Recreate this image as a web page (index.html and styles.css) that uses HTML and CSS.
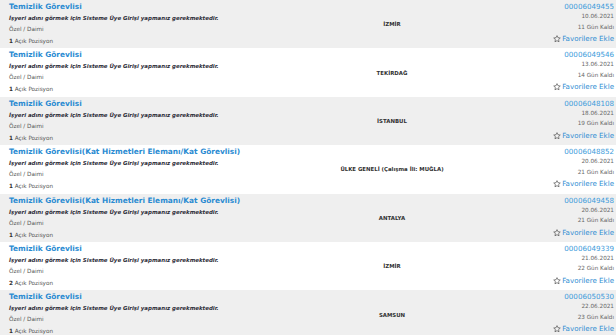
FILE: index.html
```html
<!DOCTYPE html>
<html lang="tr">
<head>
<meta charset="UTF-8">
<meta name="viewport" content="width=device-width, initial-scale=1.0">
<title>İş İlanları</title>
<link rel="stylesheet" href="styles.css">
</head>
<body>
    <div class="job-list">

        <div class="job">
            <div class="job-info">
                <a class="job-title" href="#">Temizlik Görevlisi</a>
                <div class="job-note">İşyeri adını görmek için Sisteme Üye Girişi yapmanız gerekmektedir.</div>
                <div class="job-type">Özel / Daimi</div>
                <div class="job-count"><b>1</b> Açık Pozisyon</div>
            </div>
            <div class="job-city">İZMİR</div>
            <div class="job-meta">
                <a class="job-no" href="#">00006049455</a>
                <div class="job-date">10.06.2021</div>
                <div class="job-left">11 Gün Kaldı</div>
                <a class="job-fav" href="#"><svg viewBox="0 0 10 10"><path d="M5 .8l1.25 2.6 2.85.35-2.1 1.95.55 2.8L5 7.1 2.45 8.5 3 5.7.9 3.75l2.85-.35z"/></svg>Favorilere Ekle</a>
            </div>
        </div>

        <div class="job">
            <div class="job-info">
                <a class="job-title" href="#">Temizlik Görevlisi</a>
                <div class="job-note">İşyeri adını görmek için Sisteme Üye Girişi yapmanız gerekmektedir.</div>
                <div class="job-type">Özel / Daimi</div>
                <div class="job-count"><b>1</b> Açık Pozisyon</div>
            </div>
            <div class="job-city">TEKİRDAĞ</div>
            <div class="job-meta">
                <a class="job-no" href="#">00006049546</a>
                <div class="job-date">13.06.2021</div>
                <div class="job-left">14 Gün Kaldı</div>
                <a class="job-fav" href="#"><svg viewBox="0 0 10 10"><path d="M5 .8l1.25 2.6 2.85.35-2.1 1.95.55 2.8L5 7.1 2.45 8.5 3 5.7.9 3.75l2.85-.35z"/></svg>Favorilere Ekle</a>
            </div>
        </div>

        <div class="job">
            <div class="job-info">
                <a class="job-title" href="#">Temizlik Görevlisi</a>
                <div class="job-note">İşyeri adını görmek için Sisteme Üye Girişi yapmanız gerekmektedir.</div>
                <div class="job-type">Özel / Daimi</div>
                <div class="job-count"><b>1</b> Açık Pozisyon</div>
            </div>
            <div class="job-city">İSTANBUL</div>
            <div class="job-meta">
                <a class="job-no" href="#">00006048108</a>
                <div class="job-date">18.06.2021</div>
                <div class="job-left">19 Gün Kaldı</div>
                <a class="job-fav" href="#"><svg viewBox="0 0 10 10"><path d="M5 .8l1.25 2.6 2.85.35-2.1 1.95.55 2.8L5 7.1 2.45 8.5 3 5.7.9 3.75l2.85-.35z"/></svg>Favorilere Ekle</a>
            </div>
        </div>

        <div class="job">
            <div class="job-info">
                <a class="job-title" href="#">Temizlik Görevlisi(Kat Hizmetleri Elemanı/Kat Görevlisi)</a>
                <div class="job-note">İşyeri adını görmek için Sisteme Üye Girişi yapmanız gerekmektedir.</div>
                <div class="job-type">Özel / Daimi</div>
                <div class="job-count"><b>1</b> Açık Pozisyon</div>
            </div>
            <div class="job-city">ÜLKE GENELİ (Çalışma İli: MUĞLA)</div>
            <div class="job-meta">
                <a class="job-no" href="#">00006048852</a>
                <div class="job-date">20.06.2021</div>
                <div class="job-left">21 Gün Kaldı</div>
                <a class="job-fav" href="#"><svg viewBox="0 0 10 10"><path d="M5 .8l1.25 2.6 2.85.35-2.1 1.95.55 2.8L5 7.1 2.45 8.5 3 5.7.9 3.75l2.85-.35z"/></svg>Favorilere Ekle</a>
            </div>
        </div>

        <div class="job">
            <div class="job-info">
                <a class="job-title" href="#">Temizlik Görevlisi(Kat Hizmetleri Elemanı/Kat Görevlisi)</a>
                <div class="job-note">İşyeri adını görmek için Sisteme Üye Girişi yapmanız gerekmektedir.</div>
                <div class="job-type">Özel / Daimi</div>
                <div class="job-count"><b>1</b> Açık Pozisyon</div>
            </div>
            <div class="job-city">ANTALYA</div>
            <div class="job-meta">
                <a class="job-no" href="#">00006049458</a>
                <div class="job-date">20.06.2021</div>
                <div class="job-left">21 Gün Kaldı</div>
                <a class="job-fav" href="#"><svg viewBox="0 0 10 10"><path d="M5 .8l1.25 2.6 2.85.35-2.1 1.95.55 2.8L5 7.1 2.45 8.5 3 5.7.9 3.75l2.85-.35z"/></svg>Favorilere Ekle</a>
            </div>
        </div>

        <div class="job">
            <div class="job-info">
                <a class="job-title" href="#">Temizlik Görevlisi</a>
                <div class="job-note">İşyeri adını görmek için Sisteme Üye Girişi yapmanız gerekmektedir.</div>
                <div class="job-type">Özel / Daimi</div>
                <div class="job-count"><b>2</b> Açık Pozisyon</div>
            </div>
            <div class="job-city">İZMİR</div>
            <div class="job-meta">
                <a class="job-no" href="#">00006049339</a>
                <div class="job-date">21.06.2021</div>
                <div class="job-left">22 Gün Kaldı</div>
                <a class="job-fav" href="#"><svg viewBox="0 0 10 10"><path d="M5 .8l1.25 2.6 2.85.35-2.1 1.95.55 2.8L5 7.1 2.45 8.5 3 5.7.9 3.75l2.85-.35z"/></svg>Favorilere Ekle</a>
            </div>
        </div>

        <div class="job">
            <div class="job-info">
                <a class="job-title" href="#">Temizlik Görevlisi</a>
                <div class="job-note">İşyeri adını görmek için Sisteme Üye Girişi yapmanız gerekmektedir.</div>
                <div class="job-type">Özel / Daimi</div>
                <div class="job-count"><b>1</b> Açık Pozisyon</div>
            </div>
            <div class="job-city">SAMSUN</div>
            <div class="job-meta">
                <a class="job-no" href="#">00006050530</a>
                <div class="job-date">22.06.2021</div>
                <div class="job-left">23 Gün Kaldı</div>
                <a class="job-fav" href="#"><svg viewBox="0 0 10 10"><path d="M5 .8l1.25 2.6 2.85.35-2.1 1.95.55 2.8L5 7.1 2.45 8.5 3 5.7.9 3.75l2.85-.35z"/></svg>Favorilere Ekle</a>
            </div>
        </div>

    </div>
</body>
</html>
```

FILE: styles.css
```css
body {
    margin: 0;
    font-family: "DejaVu Sans", Verdana, sans-serif;
    background-color: #fff;
    color: #333;
}

a {
    text-decoration: none;
}

.job {
    display: grid;
    grid-template-columns: 290px 186px 1fr;
    height: 48.4px;
    padding: 0 2px 0 9px;
    box-sizing: border-box;
    background-color: #fff;
}

.job:nth-child(odd) {
    background-color: #efefef;
}

.job-info {
    display: flex;
    flex-direction: column;
    white-space: nowrap;
}

.job-title {
    color: #2a8bd2;
    font-weight: bold;
    font-size: 7.4px;
    line-height: 13px;
}

.job-note {
    font-weight: bold;
    font-style: italic;
    font-size: 5.45px;
    line-height: 11px;
    color: #2d2d38;
}

.job-type,
.job-count {
    font-size: 5.7px;
    line-height: 11px;
    color: #555;
}

.job-count {
    line-height: 12px;
}

.job-count b {
    color: #333;
}

.job-city {
    align-self: center;
    text-align: center;
    font-weight: bold;
    font-size: 5.4px;
    color: #333;
    white-space: nowrap;
}

.job-meta {
    display: flex;
    flex-direction: column;
    align-items: flex-end;
    padding-top: 1px;
    white-space: nowrap;
}

.job-no {
    color: #3d9bdb;
    font-size: 7.1px;
    line-height: 11px;
}

.job-date,
.job-left {
    font-size: 5.7px;
    color: #666;
}

.job-date {
    line-height: 9.5px;
}

.job-left {
    line-height: 10.5px;
}

.job-fav {
    display: flex;
    align-items: center;
    gap: 1px;
    color: #2f8ed3;
    font-size: 7.1px;
    line-height: 14px;
}

.job-fav svg {
    width: 8px;
    height: 8px;
    fill: none;
    stroke: #444;
    stroke-width: 0.8;
    stroke-linejoin: round;
}
```
